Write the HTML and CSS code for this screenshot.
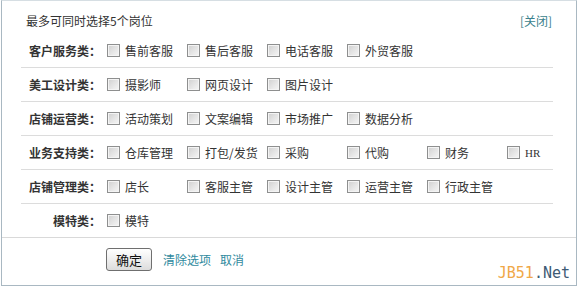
FILE: index.html
```html
<!DOCTYPE html>
<html>
<head>
  <title>选择岗位</title>
  <link rel="stylesheet" href="styles.css">
</head>
<body>
  <div class="dialog">
    <div class="dialog-head">
      <span class="tip">最多可同时选择5个岗位</span>
      <a class="close-link" href="#">[关闭]</a>
    </div>

    <ul class="groups">
      <li class="group">
        <span class="group-name">客户服务类：</span>
        <div class="options">
          <label class="option"><input type="checkbox">售前客服</label>
          <label class="option"><input type="checkbox">售后客服</label>
          <label class="option"><input type="checkbox">电话客服</label>
          <label class="option"><input type="checkbox">外贸客服</label>
        </div>
      </li>
      <li class="group">
        <span class="group-name">美工设计类：</span>
        <div class="options">
          <label class="option"><input type="checkbox">摄影师</label>
          <label class="option"><input type="checkbox">网页设计</label>
          <label class="option"><input type="checkbox">图片设计</label>
        </div>
      </li>
      <li class="group">
        <span class="group-name">店铺运营类：</span>
        <div class="options">
          <label class="option"><input type="checkbox">活动策划</label>
          <label class="option"><input type="checkbox">文案编辑</label>
          <label class="option"><input type="checkbox">市场推广</label>
          <label class="option"><input type="checkbox">数据分析</label>
        </div>
      </li>
      <li class="group">
        <span class="group-name">业务支持类：</span>
        <div class="options">
          <label class="option"><input type="checkbox">仓库管理</label>
          <label class="option"><input type="checkbox">打包/发货</label>
          <label class="option"><input type="checkbox">采购</label>
          <label class="option"><input type="checkbox">代购</label>
          <label class="option"><input type="checkbox">财务</label>
          <label class="option latin"><input type="checkbox">HR</label>
        </div>
      </li>
      <li class="group">
        <span class="group-name">店铺管理类：</span>
        <div class="options">
          <label class="option"><input type="checkbox">店长</label>
          <label class="option"><input type="checkbox">客服主管</label>
          <label class="option"><input type="checkbox">设计主管</label>
          <label class="option"><input type="checkbox">运营主管</label>
          <label class="option"><input type="checkbox">行政主管</label>
        </div>
      </li>
      <li class="group">
        <span class="group-name">模特类：</span>
        <div class="options">
          <label class="option"><input type="checkbox">模特</label>
        </div>
      </li>
    </ul>

    <div class="dialog-foot">
      <button class="btn-ok">确定</button>
      <a class="foot-link" href="#">清除选项</a>
      <a class="foot-link" href="#">取消</a>
      <span class="watermark"><em>JB51</em>.Net</span>
    </div>
  </div>
</body>
</html>
```

FILE: styles.css
```css
* {
  box-sizing: border-box;
  margin: 0;
  padding: 0;
}

body {
  width: 578px;
  height: 287px;
  background: #ffffff;
  font-family: 'Noto Sans CJK SC', 'Noto Sans', sans-serif;
  font-size: 12px;
  color: #333333;
  overflow: hidden;
}

a {
  text-decoration: none;
}

.dialog {
  width: 576px;
  height: 286px;
  margin-left: 1px;
  border: 1px solid #a9b8c2;
  border-top-color: #d6dee3;
  display: flex;
  flex-direction: column;
}

.dialog-head {
  height: 33px;
  padding: 8px 24px 0 24px;
  display: flex;
  justify-content: space-between;
  line-height: 24px;
}

.close-link {
  color: #3a7f8c;
}

/* Category rows */
.groups {
  list-style: none;
  margin: 0 23px 0 19px;
}

.group {
  display: flex;
  align-items: center;
  height: 34px;
  border-bottom: 1px solid #dcdcdc;
}

.group:last-child {
  height: 33px;
  border-bottom: none;
}

.group-name {
  flex: none;
  width: 80px;
  text-align: right;
  font-weight: 700;
  white-space: nowrap;
  color: #333333;
  margin-right: 6px;
}

.options {
  display: flex;
  flex: none;
}

.option {
  flex: none;
  width: 80px;
  display: flex;
  align-items: center;
  white-space: nowrap;
  color: #333333;
}

.option.latin {
  font-family: 'Liberation Serif', serif;
  font-size: 11px;
}

.option input {
  appearance: none;
  -webkit-appearance: none;
  flex: none;
  width: 13px;
  height: 13px;
  margin: 0 5px 0 0;
  border: 1px solid #8e8f8f;
  background: linear-gradient(135deg, #cfcfcf 0%, #e4e4e4 50%, #f6f6f6 100%);
  box-shadow: inset 0 0 0 1px #f4f4f4;
}

/* Footer */
.dialog-foot {
  flex: 1;
  border-top: 1px solid #d9d9d9;
  display: flex;
  align-items: flex-start;
  padding: 10px 6px 0 104px;
}

.btn-ok {
  width: 46px;
  height: 23px;
  border: 1px solid #6f6f6f;
  border-radius: 3px;
  background: linear-gradient(#ffffff 0%, #f0f0f0 45%, #dcdcdc 100%);
  font-family: 'Noto Sans CJK SC', sans-serif;
  font-size: 13px;
  color: #111111;
  margin-right: 11px;
}

.foot-link {
  color: #2f8a9e;
  line-height: 23px;
  margin-right: 9px;
}

.watermark {
  margin-left: auto;
  align-self: flex-end;
  margin-bottom: 3px;
  font-family: 'DejaVu Sans Mono', monospace;
  font-size: 15px;
  color: #3d5a74;
}

.watermark em {
  font-style: normal;
  color: #f0a848;
}
```
